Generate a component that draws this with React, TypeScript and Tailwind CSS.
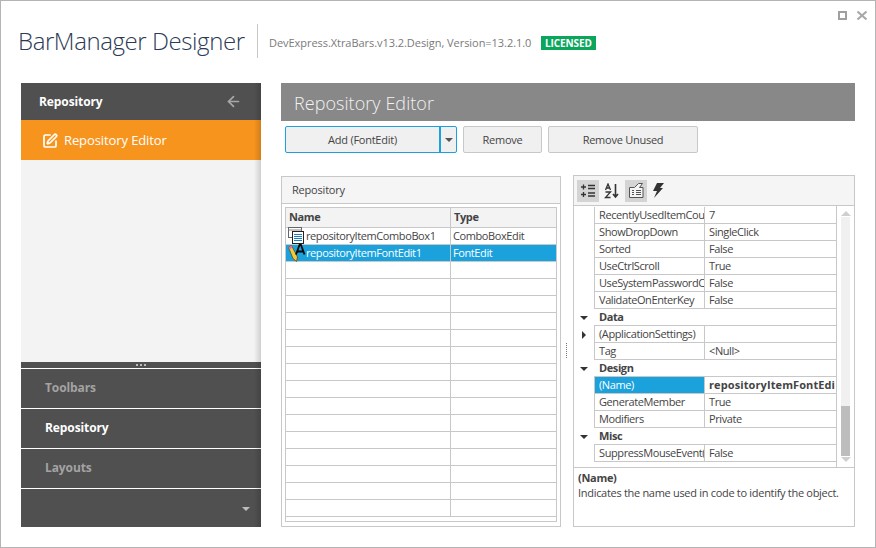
import { ArrowLeft, SquarePen } from "lucide-react";

const font = "font-['Open_Sans',sans-serif]";

type PropRow =
  | { kind: "group"; name: string }
  | { kind: "item"; name: string; value: string; expand?: boolean; selected?: boolean };

const props: PropRow[] = [
  { kind: "item", name: "RecentlyUsedItemCou", value: "7" },
  { kind: "item", name: "ShowDropDown", value: "SingleClick" },
  { kind: "item", name: "Sorted", value: "False" },
  { kind: "item", name: "UseCtrlScroll", value: "True" },
  { kind: "item", name: "UseSystemPasswordC", value: "False" },
  { kind: "item", name: "ValidateOnEnterKey", value: "False" },
  { kind: "group", name: "Data" },
  { kind: "item", name: "(ApplicationSettings)", value: "", expand: true },
  { kind: "item", name: "Tag", value: "<Null>" },
  { kind: "group", name: "Design" },
  { kind: "item", name: "(Name)", value: "repositoryItemFontEdi", selected: true },
  { kind: "item", name: "GenerateMember", value: "True" },
  { kind: "item", name: "Modifiers", value: "Private" },
  { kind: "group", name: "Misc" },
  { kind: "item", name: "SuppressMouseEvent(", value: "False" },
];

function ComboIcon() {
  return (
    <svg width="18" height="18" viewBox="0 0 18 18" className="shrink-0">
      <rect x="0.5" y="0.5" width="13" height="10" fill="#fff" stroke="#666" />
      <path d="M0.5 3h13" stroke="#888" />
      <rect x="4.500" y="4.500" width="11" height="12" fill="#fff" stroke="#222" />
      <path d="M6 7.500h8M6 9.500h8M6 11.500h8M6 13.500h8" stroke="#1c7fc4" />
    </svg>
  );
}

function FontIcon() {
  return (
    <svg width="18" height="18" viewBox="0 0 18 18" className="shrink-0">
      <path d="M0.500 3.500L3.500 1.500L9.500 13L8.500 17.500L5 14.500z" fill="#f4c93a" stroke="#5c4a1a" strokeWidth="0.8" />
      <path d="M0.500 3.500L3.500 1.500L4.500 3.500L1.500 5.500z" fill="#e86aa8" />
      <path d="M8 10.500L11.500 1h1.500l3.500 9.500M9.500 7.500h5.500" fill="none" stroke="#0a0a0a" strokeWidth="1.800" />
    </svg>
  );
}

function Caret({ className }: { className: string }) {
  return <div className={`w-0 h-0 border-l-[4px] border-r-[4px] border-t-[4px] border-l-transparent border-r-transparent ${className}`} />;
}

function SideShadow() {
  return <div className="absolute top-0 bottom-0 right-0 w-[7px] bg-gradient-to-r from-transparent to-black/15" />;
}

function NavItem({ label, active }: { label: string; active?: boolean }) {
  return (
    <div className={`h-[40px] border-t border-white flex items-center pl-[24px] pb-[2px] text-[12px] font-bold tracking-[-0.1px] ${active ? "text-white" : "text-[#a3a3a3]"}`}>
      {label}
    </div>
  );
}

function Sidebar() {
  return (
    <div className="relative w-[240px] flex flex-col">
      <div className="h-[37px] bg-[#505050] flex items-center justify-between pl-[18px] pr-[19px] text-white text-[12px] font-bold tracking-[-0.1px]">
        <span>Repository</span>
        <ArrowLeft size={17} strokeWidth={2.4} className="text-[#a8a8a8]" />
      </div>
      <div className="h-[40px] bg-[#f7941d] flex items-center pl-[21px] pt-[1px] text-white text-[13px] tracking-[-0.1px]">
        <SquarePen size={16} strokeWidth={2.6} className="mr-[6px]" />
        <span>Repository Editor</span>
      </div>
      <div className="flex-1 bg-[#f3f3f3]" />
      <div className="h-[6px] bg-[#505050] flex justify-center items-center gap-[2px]">
        <div className="w-[2px] h-[2px] bg-[#bbb]" />
        <div className="w-[2px] h-[2px] bg-[#bbb]" />
        <div className="w-[2px] h-[2px] bg-[#bbb]" />
      </div>
      <div className="bg-[#505050]">
        <NavItem label="Toolbars" />
        <NavItem label="Repository" active />
        <NavItem label="Layouts" />
        <div className="h-[39px] border-t border-white flex items-center justify-end pr-[11px] pt-[2px]">
          <Caret className="border-t-[#bdbdbd]" />
        </div>
      </div>
      <SideShadow />
    </div>
  );
}

function RepositoryPanel() {
  const empties = Array.from({ length: 15 });
  return (
    <div className="w-[280px] mt-px border border-[#c8c8c8] flex flex-col">
      <div className="h-[27px] bg-[#f5f5f5] border-b border-[#c8c8c8] flex items-center pl-[10px] text-[11px] tracking-[-0.2px] text-[#444]">
        Repository
      </div>
      <div className="flex-1 mx-[3px] mt-[3px] mb-[4px] border border-[#c8c8c8] text-[11px] tracking-[-0.4px] overflow-hidden">
        <div className="h-[20px] flex bg-[#f3f3f3] border-b border-[#c8c8c8] font-bold text-[#444]">
          <div className="w-[165px] border-r border-[#c8c8c8] pl-[3px] flex items-center">Name</div>
          <div className="pl-[3px] flex items-center">Type</div>
        </div>
        <div className="h-[17px] flex border-b border-[#c8c8c8] text-[#444]">
          <div className="w-[165px] border-r border-[#c8c8c8] pl-[2px] flex items-center">
            <ComboIcon />
            <span>repositoryItemComboBox1</span>
          </div>
          <div className="pl-[2px] flex items-center">ComboBoxEdit</div>
        </div>
        <div className="h-[17px] flex border-b border-[#c8c8c8] bg-[#1ba1dc] text-white">
          <div className="w-[165px] border-r border-[#c8c8c8] pl-[2px] flex items-center">
            <FontIcon />
            <span>repositoryItemFontEdit1</span>
          </div>
          <div className="pl-[2px] flex items-center">FontEdit</div>
        </div>
        {empties.map((_, i) => (
          <div key={i} className="h-[17px] flex border-b border-[#c8c8c8]">
            <div className="w-[165px] border-r border-[#c8c8c8]" />
          </div>
        ))}
      </div>
    </div>
  );
}

function PropToolbar() {
  return (
    <div className="h-[30px] bg-[#f5f5f5] border-b border-[#c8c8c8] flex items-center pl-[3px] gap-[2px]">
      <div className="w-[22px] h-[22px] bg-[#d4d4d4] flex items-center justify-center">
        <svg width="14" height="14" viewBox="0 0 14 14" stroke="#333" fill="none">
          <path d="M0 3h5M2.500 .5v5M7 1.500h7M7 4.500h7M0 10.500h5M2.500 8v5M7 9h7M7 12h7" strokeWidth="1.300" />
        </svg>
      </div>
      <div className="w-[22px] h-[22px] flex items-center justify-center">
        <svg width="16" height="16" viewBox="0 0 16 16" fill="none" stroke="#333" strokeWidth="1.300">
          <path d="M1.500 7L4 1l2.500 6M2.500 5h3M1.500 9h5l-5 5.500h5" />
          <path d="M11.500 1v12.500M9 11l2.500 3 2.500-3" strokeWidth="1.600" />
        </svg>
      </div>
      <div className="w-[22px] h-[22px] bg-[#d4d4d4] flex items-center justify-center">
        <svg width="17" height="17" viewBox="0 0 17 17" fill="none" stroke="#555">
          <path d="M1.500 5.500h5l4-4h4l-3 4h3.500v10h-13.500z" fill="#f5f5f5" />
          <path d="M4 8.500h2M8 8.500h5M4 10.500h2M8 10.500h5M4 12.500h2M8 12.500h5" />
        </svg>
      </div>
      <div className="w-[18px] h-[22px] flex items-center justify-center">
        <svg width="12" height="15" viewBox="0 0 12 15" fill="#333">
          <path d="M5 0h7L8 5h3L2 15l3-7H1z" />
        </svg>
      </div>
    </div>
  );
}

function PropGrid() {
  return (
    <div className="flex-1 flex border-b border-[#c8c8c8] text-[11px] tracking-[-0.4px] text-[#444]">
      <div className="w-[263px] border-r border-[#c8c8c8] pt-[1px]">
        {props.map((row) =>
          row.kind === "group" ? (
            <div key={row.name} className="h-[17px] flex items-center">
              <div className="w-[20px] flex justify-center pr-[1px]">
                <Caret className="border-t-[#333]" />
              </div>
              <div className="flex-1 h-full border-b border-[#c8c8c8] pl-[5px] font-bold flex items-center">{row.name}</div>
            </div>
          ) : (
            <div key={row.name} className="h-[17px] flex items-center">
              <div className="w-[20px] flex justify-center">
                {row.expand && (
                  <div className="w-0 h-0 border-t-[4px] border-b-[4px] border-l-[4px] border-t-transparent border-b-transparent border-l-[#333]" />
                )}
              </div>
              <div className={`w-[111px] h-full border-l border-r border-b border-[#c8c8c8] pl-[4px] flex items-center overflow-hidden whitespace-nowrap ${row.selected ? "bg-[#1ba1dc] text-white" : ""}`}>
                {row.name}
              </div>
              <div className={`flex-1 h-full border-b border-[#c8c8c8] pl-[4px] flex items-center overflow-hidden whitespace-nowrap ${row.selected ? "font-bold tracking-[0.1px]" : ""}`}>
                {row.value}
              </div>
            </div>
          ),
        )}
      </div>
      <div className="flex-1 flex flex-col items-center pt-[5px] pb-[5px] bg-white">
        <div className="w-0 h-0 border-l-[5px] border-r-[5px] border-b-[5px] border-l-transparent border-r-transparent border-b-[#cfcfcf]" />
        <div className="w-[9px] flex-1 flex flex-col bg-[#f0f0f0] my-[1px]">
          <div className="flex-1" />
          <div className="h-[50px] bg-[#bdbdbd]" />
        </div>
        <div className="w-0 h-0 border-l-[5px] border-r-[5px] border-t-[5px] border-l-transparent border-r-transparent border-t-[#cfcfcf]" />
      </div>
    </div>
  );
}

function PropertyPanel() {
  return (
    <div className="w-[282px] border border-[#c8c8c8] flex flex-col">
      <PropToolbar />
      <PropGrid />
      <div className="h-[58px] px-[4px] pt-[2px] text-[11px] tracking-[-0.3px] text-[#444] leading-[15px] whitespace-nowrap">
        <div className="font-bold">(Name)</div>
        <div>Indicates the name used in code to identify the object.</div>
      </div>
    </div>
  );
}

function Button({ label, width }: { label: string; width: string }) {
  return (
    <div className={`${width} h-[27px] bg-[#f0f0f0] border border-[#c8c8c8] rounded-[2px] flex items-center justify-center pt-[1px] text-[11px] tracking-[-0.25px] text-[#444]`}>
      {label}
    </div>
  );
}

export default function App() {
  return (
    <div className={`${font} relative w-[876px] h-[548px] bg-white border border-[#b4b4b4] flex flex-col overflow-hidden`}>
      <div className="absolute top-[10px] right-[8px] flex items-center gap-[10px]">
        <div className="w-[9px] h-[9px] border-2 border-[#a0a0a0]" />
        <svg width="10" height="9" viewBox="0 0 10 9" stroke="#a8a8a8" strokeWidth="2">
          <path d="M0.500 0.500l9 8M9.500 0.500l-9 8" />
        </svg>
      </div>

      <div className="h-[82px] flex items-start pl-[17px] pt-[23px]">
        <div className="text-[24px] font-light leading-[34px] tracking-[-0.42px] text-[#2b3a55] w-[239px] whitespace-nowrap">BarManager Designer</div>
        <div className="w-px h-[34px] bg-[#c8c8c8]" />
        <div className="ml-[11px] mt-[11px] text-[11px] leading-[16px] tracking-[-0.05px] text-[#7a7a7a] w-[272px] whitespace-nowrap">DevExpress.XtraBars.v13.2.Design, Version=13.2.1.0</div>
        <div className="mt-[12px] h-[14px] px-[4px] bg-[#0ca55c] text-white text-[10px] font-bold leading-[14px] tracking-[-0.1px]">LICENSED</div>
      </div>

      <div className="flex-1 flex pl-[20px] gap-[20px] pb-[20px]">
        <Sidebar />
        <div className="w-[574px] flex flex-col">
          <div className="h-[38px] bg-[#888888] flex items-center pl-[13px] pt-[3px] text-[#f2f2f2] text-[18px] font-light tracking-[0.05px]">Repository Editor</div>
          <div className="mt-[5px] pl-[4px] flex gap-[6px]">
            <div className="flex h-[27px] w-[172px] border border-[#1ba1dc] rounded-[2px] bg-[#f0f0f0] text-[11px] tracking-[-0.25px] text-[#444]">
              <div className="flex-1 flex items-center justify-center pt-[1px] border-r-2 border-[#1ba1dc]">Add (FontEdit)</div>
              <div className="w-[15px] flex items-center justify-center">
                <Caret className="border-t-[#555]" />
              </div>
            </div>
            <Button label="Remove" width="w-[79px]" />
            <Button label="Remove Unused" width="w-[150px]" />
          </div>
          <div className="relative flex-1 mt-[22px] flex gap-[12px]">
            <RepositoryPanel />
            <div className="absolute left-[285px] top-[168px] h-[15px] border-l border-dotted border-[#777]" />
            <PropertyPanel />
          </div>
        </div>
      </div>
    </div>
  );
}
